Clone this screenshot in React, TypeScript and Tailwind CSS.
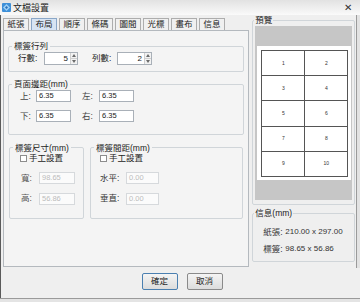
import type { ReactNode } from "react";

const tabs = ["紙張", "布局", "順序", "條碼", "圖間", "光標", "畫布", "信息"];

function Group({ label, className, children }: { label: string; className: string; children: ReactNode }) {
  return (
    <fieldset className={`rounded-[2px] border border-[#d0d5d9] ${className}`}>
      <legend className="ml-[3px] px-[2px] text-[8.5px] leading-[12px] text-[#222]">{label}</legend>
      {children}
    </fieldset>
  );
}

function Arrow({ up }: { up?: boolean }) {
  return (
    <svg width="4" height="3" viewBox="0 0 4 3">
      <path d={up ? "M0 3 L2 0 L4 3 Z" : "M0 0 L2 3 L4 0 Z"} fill="#6b6b6b" />
    </svg>
  );
}

function Spin({ value, width }: { value: string; width: string }) {
  return (
    <div className={`flex h-[13px] border border-[#a9b0b8] bg-white ${width}`}>
      <div className="flex-1 pr-[2px] text-right text-[8px] leading-[11px] text-[#222]">{value}</div>
      <div className="flex w-[7px] flex-col border-l border-[#cfcfcf]">
        <div className="flex flex-1 items-center justify-center border-b border-[#cfcfcf] bg-[#f2f2f2]">
          <Arrow up />
        </div>
        <div className="flex flex-1 items-center justify-center bg-[#f2f2f2]">
          <Arrow />
        </div>
      </div>
    </div>
  );
}

function Field({ value, width, disabled }: { value: string; width: string; disabled?: boolean }) {
  return (
    <div
      className={`h-[12px] border pl-[2px] text-[7.5px] leading-[10px] ${width} ${
        disabled ? "border-[#d6d9dc] bg-[#fbfbfb] text-[#bcbcbc]" : "border-[#a9b0b8] bg-white text-[#222]"
      }`}
    >
      {value}
    </div>
  );
}

function Check({ label }: { label: string }) {
  return (
    <div className="flex h-[10px] items-center gap-[2px] text-[8.5px] text-[#222]">
      <span className="h-[7px] w-[7px] border border-[#8d8d8d] bg-white" />
      {label}
    </div>
  );
}

function Button({ label, focused }: { label: string; focused?: boolean }) {
  return (
    <div
      className={`flex h-[17px] w-[36px] items-center justify-center rounded-[2px] border bg-gradient-to-b from-[#f4f4f4] to-[#dcdcdc] text-[8.5px] text-[#222] ${
        focused ? "border-[#4a7fb0]" : "border-[#8a8a8a]"
      }`}
    >
      {label}
    </div>
  );
}

export default function App() {
  return (
    <div className="flex h-[302px] w-[360px] flex-col overflow-hidden bg-[#efefef] font-['Liberation_Sans','Noto_Sans_CJK_TC',sans-serif] text-[#222]">
      {/* title bar */}
      <div className="flex h-[15px] items-center bg-gradient-to-b from-[#e2e2e2] to-[#fafafa] pl-[2px] pr-[8px]">
        <svg width="9" height="9" viewBox="0 0 9 9">
          <rect x="0" y="0" width="9" height="9" rx="1" fill="#3d8fd8" />
          <path d="M4.5 1 L8 4.5 L4.5 8 L1 4.5 Z" fill="#9cd0f5" />
          <path d="M4.5 3 L6 4.5 L4.5 6 L3 4.5 Z" fill="#2a6fb8" />
        </svg>
        <span className="ml-[2px] text-[9px] leading-[12px]">文檔設置</span>
        <span className="ml-auto text-[10px] leading-[12px] text-[#333]">✕</span>
      </div>

      {/* content */}
      <div className="flex h-[253px] border-l border-[#5a5a5a]">
        <div className="flex w-[249px] flex-col pl-[2px]">
          <div className="mt-[3px] flex h-[12px] gap-[2px]">
            {tabs.map((t) => (
              <div
                key={t}
                className={`flex w-[26px] items-center justify-center border border-b-0 text-[8.5px] leading-[11px] ${
                  t === "布局" ? "border-[#8aa7c8] bg-[#d7e4f3]" : "border-[#adadad] bg-[#f0f0f0]"
                }`}
              >
                {t}
              </div>
            ))}
          </div>
          <div className="h-[237px] w-[246px] border border-[#b4b9be] bg-[#f4f4f4]">
            <Group label="標簽行列" className="ml-[4px] mt-[9px] w-[236px]">
              <div className="flex items-center pb-[6px] pl-[9px] text-[8.5px]">
                <span className="w-[26px]">行數:</span>
                <Spin value="5" width="w-[34px]" />
                <span className="ml-[14px] w-[25px]">列數:</span>
                <Spin value="2" width="w-[35px]" />
              </div>
            </Group>

            <Group label="頁面邊距(mm)" className="ml-[4px] mt-[6px] w-[236px]">
              <div className="flex flex-col gap-[7px] pb-[11px] pl-[11px] text-[8.5px]">
                <div className="flex items-center">
                  <span className="w-[16px] text-[#444]">上:</span>
                  <Field value="6.35" width="w-[35px]" />
                  <span className="ml-[11px] w-[17px] text-[#444]">左:</span>
                  <Field value="6.35" width="w-[35px]" />
                </div>
                <div className="flex items-center">
                  <span className="w-[16px] text-[#444]">下:</span>
                  <Field value="6.35" width="w-[35px]" />
                  <span className="ml-[11px] w-[17px] text-[#444]">右:</span>
                  <Field value="6.35" width="w-[35px]" />
                </div>
              </div>
            </Group>

            <div className="mt-[7px] flex gap-[6px] pl-[5px]">
              <Group label="標簽尺寸(mm)" className="w-[75px]">
                <div className="flex flex-col pb-[13px] pl-[10px] text-[8.5px]">
                  <Check label="手工設置" />
                  <div className="mt-[8px] flex items-center">
                    <span className="w-[19px] pl-[1px] text-[#555]">寬:</span>
                    <Field value="98.65" width="w-[36px]" disabled />
                  </div>
                  <div className="mt-[8px] flex items-center">
                    <span className="w-[19px] pl-[1px] text-[#555]">高:</span>
                    <Field value="56.86" width="w-[36px]" disabled />
                  </div>
                </div>
              </Group>
              <Group label="標簽間距(mm)" className="w-[153px]">
                <div className="flex flex-col pb-[13px] pl-[9px] text-[8.5px]">
                  <Check label="手工設置" />
                  <div className="mt-[8px] flex items-center">
                    <span className="w-[26px] text-[#333]">水平:</span>
                    <Field value="0.00" width="w-[33px]" disabled />
                  </div>
                  <div className="mt-[8px] flex items-center">
                    <span className="w-[26px] text-[#333]">垂直:</span>
                    <Field value="0.00" width="w-[33px]" disabled />
                  </div>
                </div>
              </Group>
            </div>
          </div>
        </div>

        {/* preview column */}
        <div className="flex w-[107px] flex-col pl-[3px]">
          <fieldset className="w-[103px] rounded-[2px] border border-[#d0d5d9]">
            <legend className="ml-[1px] px-[1px] text-[8.5px] leading-[11px]">預覽</legend>
            <div className="ml-[2px] flex h-[174px] w-[97px] items-center bg-[#c6c6c6] pl-[2px]">
              <div className="h-[134px] w-[94px] bg-white pl-[4px] pt-[4px]">
                <div className="grid h-[127px] w-[87px] grid-cols-2 grid-rows-5 border-l border-t border-[#555]">
                  {Array.from({ length: 10 }, (_, i) => (
                    <div
                      key={i}
                      className="flex items-center justify-center border-b border-r border-[#555] text-[5px] leading-none text-[#333]"
                    >
                      {i + 1}
                    </div>
                  ))}
                </div>
              </div>
            </div>
            <div className="h-[4px]" />
          </fieldset>

          <fieldset className="mt-[3px] w-[103px] rounded-[2px] border border-[#d0d5d9]">
            <legend className="ml-[1px] px-[1px] text-[8.5px] leading-[11px]">信息(mm)</legend>
            <div className="flex flex-col gap-[5px] pb-[6px] pl-[10px] pt-[7px] text-[8px] leading-[12px] text-[#333]">
              <div className="flex">
                <span className="w-[22px] text-[8.5px]">紙張:</span>
                <span>210.00 x 297.00</span>
              </div>
              <div className="flex">
                <span className="w-[22px] text-[8.5px]">標簽:</span>
                <span>98.65 x 56.86</span>
              </div>
            </div>
          </fieldset>
        </div>

        <div className="w-[4px] border-l border-[#9a9a9a] bg-[#e2e2e2]" />
      </div>

      {/* footer */}
      <div className="flex h-[30px] justify-center gap-[9px] border-l border-[#5a5a5a] pl-[3px] pt-[5px]">
        <Button label="確定" focused />
        <Button label="取消" />
      </div>
      <div className="h-[4px] border-t border-[#9a9a9a] bg-[#e4e4e4]" />
    </div>
  );
}
